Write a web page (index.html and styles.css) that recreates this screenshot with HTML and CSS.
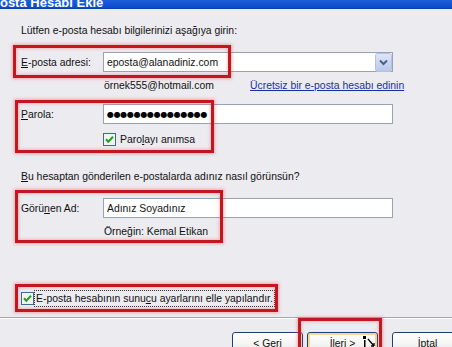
FILE: index.html
```html
<!DOCTYPE html>
<html lang="tr">
<head>
    <meta charset="UTF-8">
    <meta name="viewport" content="width=device-width, initial-scale=1.0">
    <title>E-posta Hesabı Ekle</title>
    <link rel="stylesheet" href="styles.css">
</head>
<body>
    <div class="window">
        <div class="titlebar"><span class="title">E-posta Hesabı Ekle</span></div>

        <form class="wizard">
            <p class="text intro">Lütfen e-posta hesabı bilgilerinizi aşağıya girin:</p>

            <div class="row field-row">
                <label class="label"><u>E</u>-posta adresi:</label>
                <div class="field combo">
                    <span class="value">eposta@alanadiniz.com</span>
                    <span class="combo-btn">
                        <svg width="17" height="19" viewBox="0 0 17 19">
                            <defs>
                                <linearGradient id="cb" x1="0" y1="0" x2="0" y2="1">
                                    <stop offset="0" stop-color="#dfe7f8"/>
                                    <stop offset="1" stop-color="#b7c7ea"/>
                                </linearGradient>
                            </defs>
                            <rect x="0.5" y="0.5" width="16" height="18" rx="2" fill="url(#cb)" stroke="#b3c3e4"/>
                            <path d="M5 7.5l3.5 3.5L12 7.5" fill="none" stroke="#4d6185" stroke-width="2"/>
                        </svg>
                    </span>
                </div>
            </div>

            <div class="row hint-row">
                <span class="hint">örnek555@hotmail.com</span>
                <a href="#" class="link">Ücretsiz bir e-posta hesabı edinin</a>
            </div>

            <div class="row field-row password-row">
                <label class="label"><u>P</u>arola:</label>
                <div class="field"><span class="dots">●●●●●●●●●●●●●●●</span></div>
            </div>

            <div class="row check-row remember-row">
                <svg class="check" width="13" height="13" viewBox="0 0 13 13">
                    <rect x="0.5" y="0.5" width="12" height="12" fill="#f3f3ee" stroke="#3d6a94"/>
                    <path d="M3 6.2l2.3 2.5L10 3.8" fill="none" stroke="#21a121" stroke-width="2"/>
                </svg>
                <span class="check-label">Paro<u>l</u>ayı anımsa</span>
            </div>

            <p class="text question"><u>B</u>u hesaptan gönderilen e-postalarda adınız nasıl görünsün?</p>

            <div class="row field-row name-row">
                <label class="label">Görü<u>n</u>en Ad:</label>
                <div class="field"><span class="value">Adınız Soyadınız</span></div>
            </div>

            <div class="row hint-row example-row">
                <span class="hint">Örneğin: Kemal Etikan</span>
            </div>

            <div class="row check-row manual-row">
                <svg class="check" width="13" height="13" viewBox="0 0 13 13">
                    <rect x="0.5" y="0.5" width="12" height="12" fill="#f3f3ee" stroke="#3d6a94"/>
                    <path d="M3 6.2l2.3 2.5L10 3.8" fill="none" stroke="#21a121" stroke-width="2"/>
                </svg>
                <span class="check-label focus">E-posta hesabının sunu<u>c</u>u ayarlarını elle yapılandır.</span>
            </div>
        </form>

        <div class="separator"></div>

        <div class="buttons">
            <button type="button" class="btn">&lt; Geri</button>
            <button type="button" class="btn btn-default">İleri &gt;</button>
            <button type="button" class="btn btn-cancel">İptal</button>
        </div>

        <!-- annotation marks drawn over the dialog -->
        <div class="mark mark-email"></div>
        <div class="mark mark-password"></div>
        <div class="mark mark-name"></div>
        <div class="mark mark-manual"></div>
        <div class="mark mark-next"></div>

        <svg class="cursor" width="14" height="14" viewBox="0 0 14 14">
            <rect x="1" y="2" width="3" height="3" fill="#000"/>
            <rect x="2" y="6" width="1.5" height="8" fill="#000"/>
            <path d="M6 5l6 7" stroke="#000" stroke-width="1.3"/>
            <path d="M12 12l-3 0M12 12l0-3" stroke="#000" stroke-width="1.3"/>
        </svg>
    </div>
</body>
</html>
```

FILE: styles.css
```css
html, body {
    margin: 0;
    height: 347px;
    overflow: hidden;
}

body {
    font-family: "Liberation Sans", Arial, sans-serif;
    font-size: 10.4px;
    color: #111;
    background-color: #ecebf0;
}

.window {
    position: relative;
    height: 347px;
}

.titlebar {
    height: 9px;
    overflow: hidden;
    background: linear-gradient(#1d5fd8, #0b4bc9);
    border-bottom: 1px solid #0a3fae;
    box-sizing: border-box;
}

.title {
    display: block;
    margin: -4px 0 0 -21px;
    font-size: 13px;
    line-height: 13px;
    font-weight: bold;
    color: #fff;
    white-space: nowrap;
}

.wizard {
    margin: 0;
    padding: 15px 0 0 21px;
}

.text {
    margin: 0;
    line-height: 13px;
    height: 13px;
    white-space: nowrap;
}

.row {
    display: flex;
    align-items: center;
}

.field-row {
    height: 20px;
    margin-top: 15px;
}

.label {
    width: 82px;
    flex: none;
}

.field {
    width: 290px;
    height: 20px;
    box-sizing: border-box;
    border: 1px solid #97a3b5;
    background-color: #fff;
    padding: 0 0 0 3px;
    display: flex;
    align-items: center;
}

.value {
    flex: 1;
    white-space: nowrap;
}

.combo-btn {
    display: flex;
    width: 17px;
    height: 19px;
}

.hint-row {
    height: 13px;
    margin-top: 7px;
    padding-left: 83px;
}

.hint {
    width: 146px;
    white-space: nowrap;
}

.link {
    color: #1a2ea6;
    text-decoration: underline;
    white-space: nowrap;
}

.password-row {
    margin-top: 12px;
}

.dots {
    font-family: "DejaVu Sans", sans-serif;
    font-size: 8px;
    letter-spacing: -0.3px;
    color: #000;
}

.check-row {
    height: 13px;
}

.check {
    flex: none;
    display: block;
}

.check-label {
    line-height: 13px;
    white-space: nowrap;
}

.remember-row {
    margin-top: 9px;
    padding-left: 82px;
}

.remember-row .check-label {
    margin-left: 4px;
}

.question {
    margin-top: 24px;
}

.example-row .hint {
    width: auto;
}

.manual-row {
    margin-top: 54px;
}

.manual-row .check-label {
    margin-left: 2px;
}

.focus {
    outline: 1px dotted #333;
    outline-offset: 1px;
}

.separator {
    margin-top: 12px;
    border-top: 1px solid #a6a5ad;
    border-bottom: 1px solid #fff;
}

.buttons {
    display: flex;
    margin-top: 13px;
    padding-left: 232px;
    gap: 4px;
}

.btn {
    flex: none;
    width: 71px;
    height: 23px;
    border: 1px solid #1f3f74;
    border-radius: 3px;
    background: linear-gradient(#ffffff, #f4f4f2 55%, #dcdfe8);
    font-family: "Liberation Sans", Arial, sans-serif;
    font-size: 10.4px;
    color: #111;
    padding: 0;
}

.btn-default {
    box-shadow: inset 0 0 0 2px #f3d99a;
}

.btn-cancel {
    margin-left: 10px;
}

.mark {
    position: absolute;
    border: 3px solid #c4161f;
    box-shadow: 0 0 3px 1px rgba(232, 90, 90, 0.45), inset 0 0 3px 1px rgba(232, 90, 90, 0.35);
    box-sizing: border-box;
}

.mark-email {
    left: 13px;
    top: 45px;
    width: 218px;
    height: 33px;
}

.mark-password {
    left: 15px;
    top: 100px;
    width: 199px;
    height: 53px;
}

.mark-name {
    left: 15px;
    top: 190px;
    width: 208px;
    height: 53px;
}

.mark-manual {
    left: 15px;
    top: 284px;
    width: 263px;
    height: 28px;
}

.mark-next {
    left: 298px;
    top: 318px;
    width: 84px;
    height: 40px;
}

.cursor {
    position: absolute;
    left: 362px;
    top: 334px;
}
```
